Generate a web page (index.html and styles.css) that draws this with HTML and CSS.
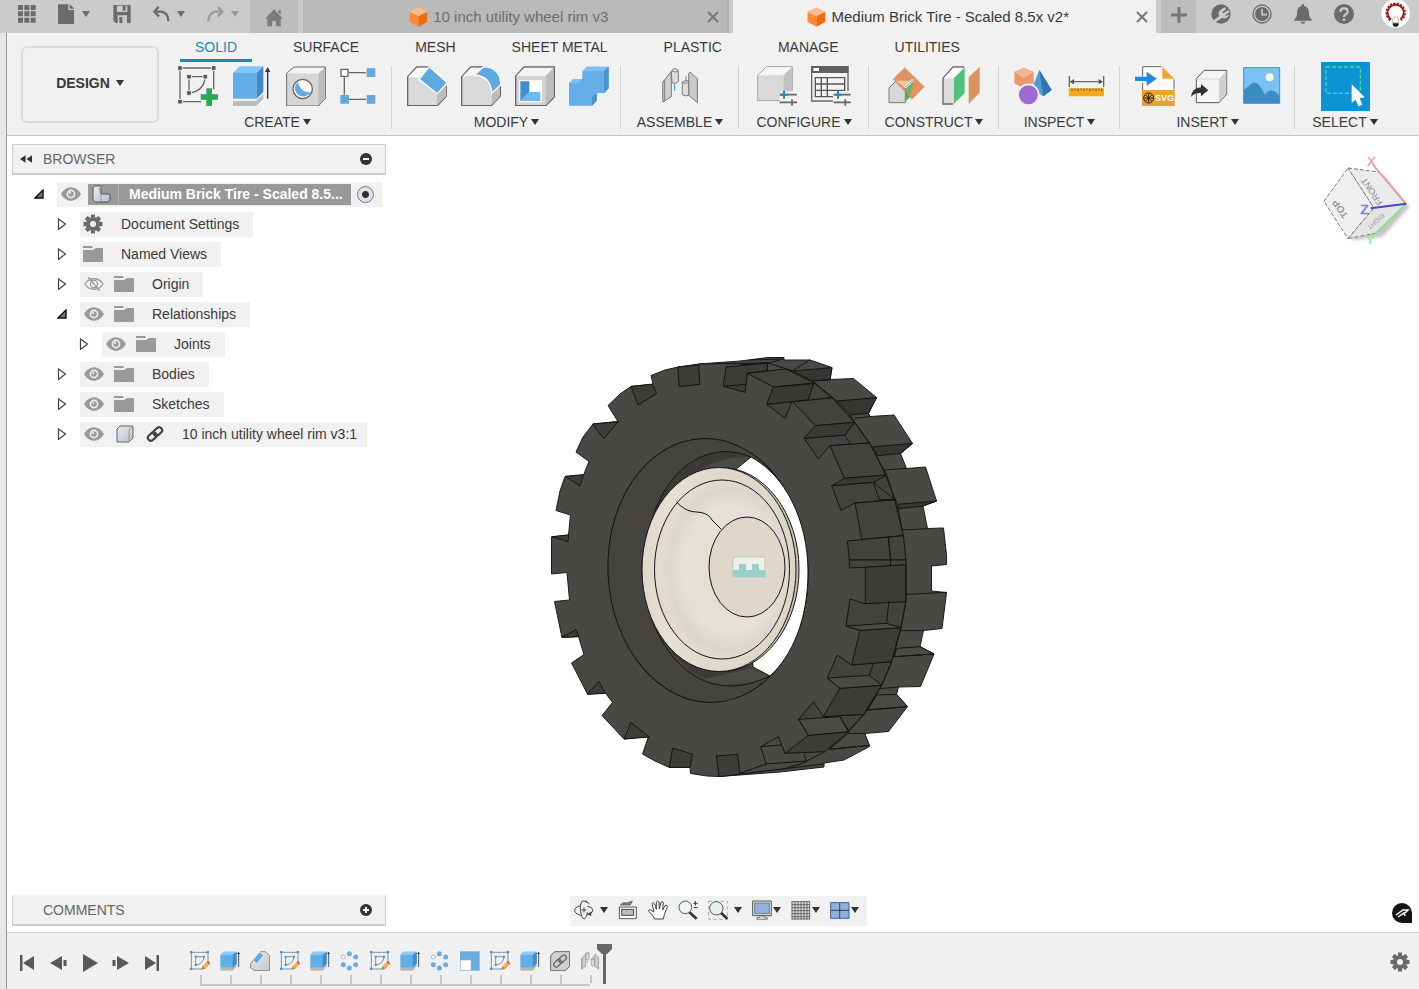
FILE: index.html
```html
<!DOCTYPE html>
<html lang="en">
<head>
<meta charset="utf-8">
<title>Medium Brick Tire - Scaled 8.5x v2*</title>
<link rel="stylesheet" href="styles.css">
</head>
<body>
<svg class="defs" aria-hidden="true">
  <defs>
    <linearGradient id="gGrey" x1="0" y1="0" x2="1" y2="1"><stop offset="0" stop-color="#e9e9e9"/><stop offset="1" stop-color="#c9c9c9"/></linearGradient>
    <linearGradient id="gSteel" x1="0" y1="0" x2="1" y2="1"><stop offset="0" stop-color="#e8ebf2"/><stop offset="1" stop-color="#b9bfcb"/></linearGradient>
    <linearGradient id="gRim" x1="0" y1="0" x2="1" y2="0"><stop offset="0" stop-color="#ded7cc"/><stop offset=".18" stop-color="#e6e0d6"/><stop offset=".4" stop-color="#dfdad0"/><stop offset="1" stop-color="#ddd5c7"/></linearGradient>
    <radialGradient id="gDish" cx=".56" cy=".5" r=".56"><stop offset="0" stop-color="#e3ddd2"/><stop offset=".62" stop-color="#e6e1d8"/><stop offset=".8" stop-color="#dbd7ce"/><stop offset=".92" stop-color="#e2dcd1"/><stop offset="1" stop-color="#e0d9cd"/></radialGradient>
    <filter id="soft"><feGaussianBlur stdDeviation="4"/></filter>
  </defs>
  <symbol id="caret" viewBox="0 0 8 6"><path d="M0 0h8L4 6z"/></symbol>
  <symbol id="cube" viewBox="0 0 56 60"><path d="M28 1 54 14 28 28 1 14z" fill="#ffb98a"/><path d="M1 14 28 28V59L1 45z" fill="#ff8a35"/><path d="M54 14 28 28V59L54 45z" fill="#f26a0f"/></symbol>
  <symbol id="close" viewBox="0 0 12 12"><path d="M1 1 11 11M11 1 1 11" fill="none" stroke="#777" stroke-width="2"/></symbol>
  <symbol id="closed" viewBox="0 0 10 12"><path d="M1.500 1 8.500 6 1.500 11.500z" fill="#fff" stroke="#444" stroke-width="1.200"/></symbol>
  <symbol id="open" viewBox="0 0 10 10"><path d="M9 1V9H1z" fill="#777" stroke="#111" stroke-width="1.400"/></symbol>
  <symbol id="eye" viewBox="0 0 20 14"><path d="M0 7C5-2 15-2 20 7 15 16 5 16 0 7z" fill="#999"/><circle cx="10" cy="7" r="4.400" fill="#f1f1f1"/><circle cx="10" cy="7" r="2.800" fill="#999"/><circle cx="9" cy="6" r="1" fill="#f1f1f1"/></symbol>
  <symbol id="eyeoff" viewBox="0 0 20 14"><path d="M1 7C5 0 15 0 19 7 15 14 5 14 1 7zM4 0 16 14" fill="none" stroke="#999" stroke-width="1.300"/><circle cx="10" cy="7" r="3.600" fill="none" stroke="#999" stroke-width="1.300"/></symbol>
  <symbol id="folder" viewBox="0 0 20 16"><path d="M0 0H9L10 2H0zM0 4H10L13 2H20V16H0z" fill="#999"/></symbol>
  <symbol id="gear" viewBox="-10 -10 20 20"><g fill="#6b6b6b"><circle r="6.800"/><path d="M-1.900-9.500H1.900L2.400-5H-2.400zM-1.900 9.500H1.900L2.400 5H-2.400z"/><path d="M-1.900-9.500H1.900L2.400-5H-2.400zM-1.900 9.500H1.900L2.400 5H-2.400z" transform="rotate(45)"/><path d="M-1.900-9.500H1.900L2.400-5H-2.400zM-1.900 9.500H1.900L2.400 5H-2.400z" transform="rotate(90)"/><path d="M-1.900-9.500H1.900L2.400-5H-2.400zM-1.900 9.500H1.900L2.400 5H-2.400z" transform="rotate(135)"/></g><circle r="3" fill="#f1f1f1"/></symbol>
  <symbol id="t-sketch" viewBox="0 0 60 60"><path d="M4 4H54V38M4 4V54H38" fill="none" stroke="#6d7d8d" stroke-width="2.500"/><path d="M17 17H42Q40 40 17 42z" fill="none" stroke="#6d7d8d" stroke-width="2.500"/><path fill="#4b8fce" d="M0 0h7v7H0zM50 0h7v7H50zM0 50h7v7H0zM14 14h6v6h-6zM39 14h6v6h-6zM14 39h6v6h-6z"/><path d="M34 56 38 45 50 33 58 41 46 53z" fill="#f2b04a"/><path d="M50 33 54 30 60 37 58 41z" fill="#e2492f"/><path d="M34 56 38 45 46 53z" fill="#a98b63"/></symbol>
  <symbol id="t-extrude" viewBox="0 0 60 60"><path d="M1 50H38L50 40V46L38 59H1z" fill="#b8b8b2"/><path d="M1 12 10 2H50V38L38 50H1z" fill="#62aee8"/><path d="M1 12 10 2H50L38 12z" fill="#8fc9f3"/><path d="M38 12 50 2V38L38 50z" fill="#3f8fd0"/><path d="M56 48V8" stroke="#333" stroke-width="2.500"/><path d="M51 9 56 2 60 9z" fill="#333"/></symbol>
  <symbol id="t-chamfer" viewBox="0 0 60 60"><path d="M2 38 32 2H46L59 14V59H14L2 50z" fill="url(#gGrey)" stroke="#777" stroke-width="2.500"/><path d="M8 28 28 3 42 12 21 38z" fill="#62a9df" stroke="#fff" stroke-width="2"/></symbol>
  <symbol id="t-circ" viewBox="0 0 60 60"><g fill="#6cacdd"><circle cx="28" cy="8" r="7.500"/><circle cx="47" cy="18" r="7.500"/><circle cx="47" cy="41" r="7.500"/><circle cx="28" cy="51" r="7.500"/><circle cx="10" cy="41" r="7.500"/></g><circle cx="10" cy="18" r="6" fill="#fff" stroke="#999" stroke-width="2"/></symbol>
  <symbol id="t-scale" viewBox="0 0 60 60"><path d="M0 1H59V59H0z" fill="#69addf"/><path d="M1 27H33V58H1z" fill="#fff" stroke="#a9b4bd" stroke-width="2"/></symbol>
  <symbol id="t-link" viewBox="0 0 60 60"><path d="M2 14 14 2H59V46L46 59H2z" fill="#cfcfcf" stroke="#666" stroke-width="3"/><g fill="none" stroke="#666" stroke-width="4"><rect x="-13" y="-8" width="26" height="15" rx="7" transform="translate(23 37) rotate(-45)"/><rect x="-13" y="-8" width="26" height="15" rx="7" transform="translate(38 24) rotate(-45)"/></g></symbol>
  <symbol id="joint" viewBox="0 0 120 120"><g stroke="#7a7a7a" stroke-width="3" stroke-linejoin="round"><path d="M9 48 34 16V92L9 108z" fill="#cfcfcf"/><path d="M9 48 14 42V104L9 108z" fill="#efefef"/><path d="M34 17Q36 8 46 8 55 9 55 16V46Q50 55 36 50z" fill="#dedede"/><path d="M36 15Q46 22 55 14" fill="none"/><path d="M86 24 90 18 112 38V110L86 88z" fill="#c9c9c9"/><path d="M67 48Q76 42 86 44V88Q76 92 67 86z" fill="#dedede"/><path d="M67 50Q76 54 86 50" fill="none"/></g><path d="M44 54V74M78 30V46" stroke="#2d9be0" stroke-width="3"/></symbol>
</svg>

<header class="topbar">
  <div class="quick">
    <button class="q-grid" aria-label="Data panel"><svg width="18" height="18" viewBox="54 12 54 54"><path fill="#6b6b6b" d="M54 12h15v15H54zM73 12h15v15H73zM92 12h15v15H92zM54 31h15v15H54zM73 31h15v15H73zM92 31h15v15H92zM54 50h15v15H54zM73 50h15v15H73zM92 50h15v15H92z"/></svg></button>
    <button class="q-file" aria-label="File"><svg width="17" height="20" viewBox="180 9 51 60"><path fill="#6b6b6b" d="M180 10H211V27H228V69H180zM215 9 229 23H215z"/></svg><svg class="caret"><use href="#caret"/></svg></button>
    <button class="q-save" aria-label="Save"><svg width="18" height="18" viewBox="347 12 54 54"><path fill="#6b6b6b" fill-rule="evenodd" d="M348 12H400V66H355L348 59zM359 14V33H390V14zM361 43V66H389V43z"/><path fill="#6b6b6b" d="M376 14h9v15h-9zM366 48h9v18h-9z"/></svg></button>
    <button class="q-undo" aria-label="Undo"><svg width="17" height="16" viewBox="474 16 51 48"><path fill="none" stroke="#6b6b6b" stroke-width="7" d="M491 18 478 33 492 47M479 33H500Q520 37 520 62"/></svg><svg class="caret"><use href="#caret"/></svg></button>
    <button class="q-redo" aria-label="Redo"><svg width="17" height="16" viewBox="617 16 51 48"><path fill="none" stroke="#9a9a9a" stroke-width="7" d="M650 18 663 33 649 47M662 33H642Q622 37 621 62"/></svg><svg class="caret"><use href="#caret"/></svg></button>
  </div>
  <button class="home" aria-label="Home"><svg width="18" height="18" viewBox="800 26 56 54"><path fill="#7c7c7c" d="M828 26 856 55H849V79H834V62H822V79H807V55H800zM841 29h8v14l-8-8z"/></svg></button>
  <div class="tab">
    <span class="tab-label"><svg width="19" height="20"><use href="#cube"/></svg>10 inch utility wheel rim v3</span>
    <button aria-label="Close tab"><svg width="12" height="12"><use href="#close"/></svg></button>
  </div>
  <div class="tab active">
    <span class="tab-label"><svg width="19" height="20"><use href="#cube"/></svg>Medium Brick Tire - Scaled 8.5x v2*</span>
    <button aria-label="Close tab"><svg width="12" height="12"><use href="#close"/></svg></button>
  </div>
  <button class="newtab" aria-label="New tab"><svg width="16" height="16" viewBox="0 0 16 16"><path d="M8 0V16M0 8H16" stroke="#777" stroke-width="3"/></svg></button>
  <div class="status">
    <button aria-label="Extensions"><svg width="20" height="20" viewBox="575 9 60 60"><circle cx="605" cy="39" r="29" fill="#6b6b6b"/><path d="M581 59 600 45Q594 35 603 27L617 18 620 25 609 33 612 37 626 27 631 33 618 42 620 46 630 39Q626 56 608 51L585 66z" fill="#cbcbcb"/></svg></button>
    <button aria-label="Job status"><svg width="20" height="20" viewBox="699 9 60 60"><circle cx="729" cy="39" r="27" fill="none" stroke="#6b6b6b" stroke-width="4"/><circle cx="729" cy="39" r="21" fill="#6b6b6b"/><path d="M729 24V41H744" fill="none" stroke="#cbcbcb" stroke-width="5"/></svg></button>
    <button aria-label="Notifications"><svg width="20" height="20" viewBox="823 9 60 60"><path fill="#6b6b6b" d="M849 10h7v5Q871 18 871 36 871 50 879 55V59H827V55Q835 50 835 36 835 18 849 15zM845 62H861Q858 68 853 68 848 68 845 62z"/></svg></button>
    <button aria-label="Help"><svg width="20" height="20" viewBox="947 9 60 60"><circle cx="977" cy="39" r="30" fill="#6b6b6b"/><path d="M966 33Q966 22 977 22 988 22 988 32 988 37 982 40 977 43 977 48" fill="none" stroke="#cbcbcb" stroke-width="6.500"/><circle cx="977" cy="56" r="4" fill="#cbcbcb"/></svg></button>
    <button class="avatar" aria-label="Account"><svg width="29" height="29" viewBox="1086 -3 87 87"><circle cx="1130" cy="40" r="43" fill="#fff"/><path d="M1114 60A27 27 0 1 1 1146 60" fill="none" stroke="#a51515" stroke-width="7" stroke-dasharray="7 3"/><path d="M1116 58A24 24 0 1 1 1144 58" fill="none" stroke="#a51515" stroke-width="5"/><path d="M1121 56Q1130 46 1139 56V68H1121z" fill="#fff" stroke="#555" stroke-width="2" stroke-dasharray="3 2"/><path d="M1121 70h18v5l-5 5h-8l-5-5z" fill="#222"/></svg></button>
  </div>
</header>

<div class="app">
  <section class="ribbon">
    <button class="workspace">DESIGN <svg class="caret"><use href="#caret"/></svg></button>
    <div class="ribbon-body">
      <nav class="modes">
        <button class="on">SOLID</button><button>SURFACE</button><button>MESH</button><button>SHEET METAL</button><button>PLASTIC</button><button>MANAGE</button><button>UTILITIES</button>
      </nav>
      <div class="groups">
        <div class="group">
          <div class="tools">
            <button aria-label="Create sketch"><svg viewBox="534 200 120 120"><path d="M540 206H641V270M540 206V307H604M567 232H616M567 232V281M616 232Q612 276 567 281" fill="none" stroke="#666" stroke-width="4"/><g fill="#555" stroke="#f1f1f1" stroke-width="3"><path d="M533 199h14v14h-14zM634 199h14v14h-14zM533 300h14v14h-14zM560 225h14v14h-14zM609 225h14v14h-14zM560 274h14v14h-14z"/></g><path d="M619 267h17v18h19v16h-19v19h-17v-19h-17v-16h17z" fill="#2aa854"/></svg></button>
            <button aria-label="Extrude"><svg viewBox="696 200 120 120"><path d="M699 305H768L790 284V298L768 320H699z" fill="#b9bcbf"/><path d="M699 221H770V298H699z" fill="#63ade6"/><path d="M699 221 719 201H790L770 221z" fill="#85c5f3"/><path d="M770 221 790 201V277L770 298z" fill="#3c8ac9"/><path d="M803 298V214" stroke="#333" stroke-width="4"/><path d="M795 218 803 203 811 218z" fill="#333"/></svg></button>
            <button aria-label="Hole"><svg viewBox="858 200 120 120"><path d="M860 222 882 203H976V297L955 320H860z" fill="#d6d6d6" stroke="#666" stroke-width="3"/><path d="M862 222 883 205H973L955 223z" fill="#f4f4f4"/><path d="M955 223 974 206V296L955 317z" fill="#bdbdbd"/><circle cx="908" cy="269" r="29" fill="#fff" stroke="#666" stroke-width="4"/><path d="M893 248A25 25 0 1 0 932 278Q903 282 893 248z" fill="#5fa9e0"/></svg></button>
            <button aria-label="Pattern"><svg viewBox="1018 200 120 120"><path d="M1045 220H1096M1031 234V286M1045 300H1096" stroke="#666" stroke-width="4"/><path d="M1021 210h21v21h-21z" fill="#fff" stroke="#666" stroke-width="4"/><path d="M1098 207h26v26h-26zM1019 287h26v26h-26zM1098 287h26v26h-26z" fill="#63a9de"/></svg></button>
          </div>
          <button class="caption">CREATE <svg class="caret"><use href="#caret"/></svg></button>
        </div>
        <div class="group">
          <div class="tools">
            <button aria-label="Chamfer"><svg viewBox="51 200 120 120"><path d="M53 319V232L80 203H120L170 262V290L142 319z" fill="#d9d9d9" stroke="#666" stroke-width="4"/><path d="M55 232 81 205H118L90 236z" fill="#f7f7f7"/><path d="M141 282 169 254V290L141 317z" fill="#bdbdbd"/><path d="M87 240 118 202 172 250 142 283z" fill="#5fa9e2" stroke="#fff" stroke-width="4"/></svg></button>
            <button aria-label="Fillet"><svg viewBox="213 200 120 120"><path d="M215 319V232L242 203H282C320 205 332 235 331 262V290L304 319z" fill="#d9d9d9" stroke="#666" stroke-width="4"/><path d="M217 232 243 205H282L256 228z" fill="#f7f7f7"/><path d="M305 282 330 258V290L305 317z" fill="#bdbdbd"/><path d="M253 227 281 202C318 203 337 232 331 258L305 282C304 248 288 230 253 227z" fill="#5fa9e2" stroke="#fff" stroke-width="4"/></svg></button>
            <button aria-label="Shell"><svg viewBox="375 200 120 120"><path d="M377 319V230L402 203H493V293L467 319z" fill="#d4d4d4" stroke="#666" stroke-width="4"/><path d="M379 230 403 205H491L467 230z" fill="#f4f4f4"/><path d="M467 230 491 206V292L467 317z" fill="#bdbdbd"/><path d="M387 242H456V309H387z" fill="#fff"/><path d="M391 246H418V278L391 305z" fill="#3f8fd0"/><path d="M391 305 418 278H451V305z" fill="#6fb7ea"/></svg></button>
            <button aria-label="Combine"><svg viewBox="537 200 120 120"><path d="M537 252 550 239H577V216L591 202H656V267L642 281H620V305L606 319H537z" fill="#63aee6"/><path d="M537 252 550 239H577L565 252zM577 216 591 202H656L642 216z" fill="#7fc0f0"/><path d="M642 216 656 202V267L642 281zM606 293 620 281V305L606 319z" fill="#4593cf"/></svg></button>
          </div>
          <button class="caption">MODIFY <svg class="caret"><use href="#caret"/></svg></button>
        </div>
        <div class="group even g-mid">
          <div class="tools"><button aria-label="Joint"><svg><use href="#joint"/></svg></button></div>
          <button class="caption">ASSEMBLE <svg class="caret"><use href="#caret"/></svg></button>
        </div>
        <div class="group even g-wide">
          <div class="tools">
            <button aria-label="Configure"><svg viewBox="80 200 120 120"><path d="M82 304V228L108 202H186V272L160 304z" fill="#d9d9d9" stroke="#888" stroke-width="2"/><path d="M84 228 109 204H184L160 228z" fill="#f6f6f6"/><path d="M160 228 185 204V270L160 300z" fill="#c2c2c2"/><path d="M148 276H204V322H148z" fill="#f1f1f1"/><path d="M148 286H201M148 309H201M185 300V319" stroke="#666" stroke-width="5"/><path d="M161 274V298M149 286H173" stroke="#2e86b8" stroke-width="6"/></svg></button>
            <button aria-label="Configuration table"><svg viewBox="242 200 120 120"><path d="M244 202H353V305H244z" fill="#f4f4f4" stroke="#666" stroke-width="4"/><path d="M243 201H354V221H243z" fill="#5f5f5f"/><path d="M249 206h17v9h-17z" fill="#fff"/><path d="M255 235H343V292H255zM255 254H343M255 273H343M273 235V292M291 235V292" fill="none" stroke="#555" stroke-width="4"/><path d="M308 275H364V322H308z" fill="#f1f1f1"/><path d="M310 286H361M310 309H361M345 300V319" stroke="#666" stroke-width="5"/><path d="M323 274V298M311 286H335" stroke="#2e86b8" stroke-width="6"/></svg></button>
          </div>
          <button class="caption">CONFIGURE <svg class="caret"><use href="#caret"/></svg></button>
        </div>
        <div class="group even g-wide">
          <div class="tools">
            <button aria-label="Plane at angle"><svg viewBox="470 200 120 120"><path d="M476 310V266L498 244 525 262V310z" fill="#d8d8d8" stroke="#777" stroke-width="3"/><path d="M524 268 552 250 540 292 524 308z" fill="#45b070"/><path d="M523 205 582 262 545 300 525 278 500 252 488 240z" fill="#dd945e" stroke="#c77d48"/><path d="M497 244H546L524 266z" fill="#f0c39f"/><path d="M524 268 550 246 538 286 525 278z" fill="#6fae72"/><path d="M525 264 548 241" stroke="#fff" stroke-width="7"/><path d="M526 263 547 242" stroke="#41a868" stroke-width="3"/></svg></button>
            <button aria-label="Offset plane"><svg viewBox="632 200 120 120"><path d="M638 314V237L668 203H700V280L668 314z" fill="#ddd" stroke="#666" stroke-width="4"/><path d="M640 237 669 205H699L668 237z" fill="#fafafa"/><path d="M669 237 704 203V282L669 316z" fill="#51c07c" stroke="#f6f6f6" stroke-width="2"/><path d="M715 234 748 202V280L715 314z" fill="#db935f"/></svg></button>
          </div>
          <button class="caption">CONSTRUCT <svg class="caret"><use href="#caret"/></svg></button>
        </div>
        <div class="group">
          <div class="tools">
            <button aria-label="Inspect"><svg viewBox="852 200 120 120"><path d="M882 205 911 218V252L882 267 853 252V218z" fill="#e79a6c"/><path d="M882 205 911 218 882 236 853 218z" fill="#f2b591"/><path d="M928 212 965 272 940 291 905 270z" fill="#4e9cd6"/><path d="M928 212 965 272 940 291z" fill="#2f77ad"/><circle cx="895" cy="286" r="31" fill="#9d69d5" stroke="#f1f1f1" stroke-width="5"/></svg></button>
            <button aria-label="Measure"><svg viewBox="1016 200 120 120"><path d="M1020 230V263M1123 230V263M1024 247H1118" stroke="#666" stroke-width="4"/><path d="M1021 247 1034 239V255zM1121 247 1108 239V255z" fill="#555"/><path d="M1018 267H1124V291H1018z" fill="#f5ab19"/><path d="M1028 267v9M1037 267v6M1046 267v9M1055 267v6M1064 267v9M1073 267v6M1082 267v9M1091 267v6M1100 267v9M1109 267v6M1117 267v9" stroke="#6d5620" stroke-width="3"/></svg></button>
          </div>
          <button class="caption">INSPECT <svg class="caret"><use href="#caret"/></svg></button>
        </div>
        <div class="group">
          <div class="tools">
            <button aria-label="Insert SVG"><svg viewBox="348 200 120 120"><path d="M371 202H428L465 238V272H371z" fill="#fbfbfb"/><path d="M371 232V202H428M465 240V270M371 250V272" fill="none" stroke="#666" stroke-width="3"/><path d="M430 202 466 238H430z" fill="#e9a93a"/><path d="M348 232H383V217L413 238 383 259V245H348z" fill="#2388d8"/><path d="M369 272H467V320H369z" fill="#e6a32e"/><g stroke="#2a2212" stroke-width="3" fill="none"><circle cx="389" cy="296" r="15"/><path d="M389 283V309M376 296H402M380 287 398 305M398 287 380 305"/></g><text x="408" y="306" font-family="Liberation Sans" font-weight="bold" font-size="27" fill="#fff">SVG</text></svg></button>
            <button aria-label="Insert derive"><svg viewBox="510 200 120 120"><path d="M532 310V238L556 213H623V285L600 310z" fill="#f4f4f4" stroke="#555" stroke-width="3"/><path d="M600 239 622 215V284L600 309z" fill="#cfcfcf"/><path d="M532 239H600" stroke="#ccc" stroke-width="2"/><path d="M516 293Q518 266 546 264V254L568 273 546 291V281Q527 279 516 293z" fill="#333"/></svg></button>
            <button aria-label="Insert canvas"><svg viewBox="671 200 120 120"><path d="M673 205H781V312H673z" fill="#79c2f5" stroke="#4f8fc0" stroke-width="3"/><path d="M673 272C690 260 695 250 706 250 722 250 728 275 738 286 748 270 762 268 781 290V311H673z" fill="#3c8cc4"/><circle cx="751" cy="234" r="12" fill="#f6f7dc"/></svg></button>
          </div>
          <button class="caption">INSERT <svg class="caret"><use href="#caret"/></svg></button>
        </div>
        <div class="group even g-select">
          <div class="tools"><button aria-label="Select"><svg viewBox="903 187 147 147"><path d="M903 187H1050V334H903z" fill="#0b93d5"/><path d="M918 202H1021V281H918z" fill="none" stroke="#52d98f" stroke-width="4" stroke-dasharray="12 6"/><path d="M995 254V309L1007 300 1015 320 1027 315 1019 296 1034 293z" fill="#fff"/></svg></button></div>
          <button class="caption">SELECT <svg class="caret"><use href="#caret"/></svg></button>
        </div>
      </div>
    </div>
  </section>

  <main class="viewport">
    <svg class="model" viewBox="7 136 1412 796" role="img" aria-label="Tire model">
      <path fill="#494844" stroke="#1c1c1a" stroke-width="1" stroke-linejoin="round" d="M699 364 678 367 665 370 651 375.500 653 384 631 386.500 620 394 608 405.500 618 421.500 593 424 583 437 576 452 589 461.500 583.500 475 565 476.500 560 491 556 510.500 570.500 515 568.500 535 551.500 537V574L567 572.500 569.500 600 554.500 601.500 562 637.500 578.500 636.500 584 654.500 571.500 663 587.500 694 605.500 693 612.500 702.500 602 715.500 624 739 648.500 736.500 642.500 754 655 761 669.500 767.500H690L690.500 773.500 707 776 719 776.500 780 772 824 767 824 763 844 760 869.500 746.500 864.500 733.500 888.500 731.500 907.500 706.500 896.500 694.500 898.500 687 920.500 686.500 934 654 920 646.500 923.500 630.500 942 628.500 946.500 592.500 931.500 591V566L946.500 564.500V555L943.500 528 927.500 528.500 923 506 936.500 501 925.500 467 906.500 468.500 900.500 453.500 912.500 443.500 894 415 870 416.500 868.500 413.500 876.500 397.500 853.500 378.500 830 379.500 832 367.500 810 360H784V357.500H768L740 361z"/>
      <g transform="translate(740 345) scale(.33333)" stroke="#141412" stroke-width="3" stroke-linejoin="round" fill="#43423f">
        <path fill="#3c3b38" d="M82 53 30 58 0 60V118L14 142 22 85 82 78z"/>
        <path fill="#373633" d="M157 78 276 68 270 105 218 108zM290 168 410 158 385 205 330 209zM396 306 518 295 483 325 413 332zM472 478 590 468 549 483 475 491z"/>
        <path d="M22 85 138 72 222 114 100 126zM80 178 156 170 135 220zM158 170 276 158 344 232 226 242zM192 280 314 270 388 293 270 302 235 342zM270 302 388 293 440 390 313 400zM275 422 400 412 464 464 345 474 303 496zM400 412 440 390 464 464H418zM345 474 464 464 490 572 365 583zM322 588 445 576 452 645H328zM445 576 490 572 498 645H452z"/>
        <path d="M314 270 344 232 388 293 332 298zM204 164 222 114 276 158 158 170z"/>
        <path fill="#3a3936" d="M100 126 221 116 204 164 156 170 80 178zM226 242 344 232 314 270 192 280zM275 422 313 400 440 390 400 412z"/>
        <path fill="none" d="M157 78 210 44M82 53 157 78M30 45 131 42M218 108 290 168M330 209 344 232M385 205 390 215 344 220M344 232 396 306 430 375 499 370M430 375 472 478 487 555 562 551M138 72 157 78M218 108 270 103M0 62 82 53"/>
      </g>
      <g transform="translate(740 560) scale(.33333)" stroke="#141412" stroke-width="3" stroke-linejoin="round" fill="#43423f">
        <path d="M328 0H498V14L376 22 328 24zM330 117 376 131 498 122 483 203 360 211 318 198zM292 285 335 315 455 305 425 376 300 385 262 354zM220 425 250 470 372 463 325 515 205 526 176 478z"/>
        <path fill="#3d3c39" d="M376 22 498 14 498 125 376 131zM360 211 483 203 455 305 335 315zM300 385 425 376 372 463 250 470zM205 526 325 515 255 575 135 580z"/>
        <path fill="#4b4a45" d="M318 198 440 190 483 203 360 211zM262 354 388 346 425 376 300 385zM176 478 300 470 328 515 205 526zM463 290 470 265 540 260 582 282zM383 450 410 405 470 403 502 440zM268 568 325 520 374 520 388 556z"/>
        <path fill="none" d="M446 128 440 190M498 14V125L483 203 455 305 425 376 372 463 325 515M400 311 388 346M300 470 325 515M452 0V16M498 103 620 97M483 212 551 212M463 290 582 282M415 386 476 381M383 450 502 440M115 530 62 560 78 612 200 603 255 575M115 530 135 580M62 560 124 555M192 582 200 606M78 612 0 640M200 606 120 630M268 568 388 556M0 642 252 612"/>
      </g>
      <g transform="translate(540 345) scale(.33333)" stroke="#141412" stroke-width="3" stroke-linejoin="round" fill="#3d3c39">
        <path d="M413 66 418 125 480 118 476 60zM558 66 550 124 615 142 622 84 680 78 684 54zM550 124 618 118M273 124 294 180 350 146 338 118zM158 237 191 282 235 230zM76 394 120 423 130 389zM35 575 84 590 86 570z"/>
        <path fill="none" d="M476 57 684 54 720 45"/>
      </g>
      <g transform="translate(540 560) scale(.33333)" stroke="#141412" stroke-width="3" stroke-linejoin="round" fill="#3d3c39">
        <path d="M66 232 108 209 116 230zM142 403 177 364 196 400zM252 537 273 487 328 531zM388 622 398 564 458 583 450 622zM537 650 529 588 593 583 600 643z"/>
      </g>
      <g stroke="#141412" stroke-width="1">
        <ellipse cx="708" cy="570.500" rx="100" ry="132" transform="rotate(-3 708 570.500)" fill="#454440"/>
        <path fill="#3b3a37" stroke="none" d="M648 535C658 488 687 452 727 451.500 737 452 746 455 751 457L735 471H700C678 480 660 505 650 540zM662 637C685 678 724 696 770 676L753 667 720 671C695 670 677 655 662 637z"/>
        <path fill="#4c4b48" stroke="none" d="M695 473Q720 456 750 457L735 470zM700 680Q735 690 769 676L753 668z"/>
        <path fill="none" d="M649 530C660 485 687 452 727 451.500Q740 452 751 457M652 620C672 672 715 703 770 676"/>
        <path fill="#fff" d="M735 470 751 457C785 475 808 520 808 572 808 620 792 656 770 676L753 667z"/>
        <ellipse cx="721" cy="569.500" rx="78" ry="102" fill="#c8c1b4"/>
        <ellipse cx="719" cy="569.500" rx="77" ry="102" fill="url(#gRim)"/>
        <ellipse cx="722" cy="569.500" rx="67.500" ry="89.500" fill="url(#gDish)"/>
        <ellipse cx="747" cy="567" rx="38" ry="50" fill="#dfd7c9"/>
        <path fill="none" d="M676.500 502Q684 510 692 511.500L701 512.500Q709 514 712 520L721 529"/>
      </g>
      <path d="M733 557H765V577H733z" fill="#eef0ec" stroke="#c3c7bd"/>
      <path d="M733 570H739V564H746V570H752V564H759V570H765V577H733z" fill="#99d0c8"/>
    </svg>

    <div class="side">
      <section class="panel"><button class="collapse" aria-label="Collapse browser"><svg width="12" height="8" viewBox="0 0 13 8"><path d="M6 0V8L0 4zM13 0V8L7 4z" fill="#333"/></svg></button><h2>BROWSER</h2><button aria-label="Hide browser"><svg width="12" height="12" viewBox="0 0 12 12"><circle cx="6" cy="6" r="6" fill="#333"/><path d="M3 6H9" stroke="#fff" stroke-width="2"/></svg></button></section>
      <ul class="tree">
        <li class="root"><button aria-label="Collapse"><svg width="10" height="10"><use href="#open"/></svg></button><div class="row"><svg width="20" height="14"><use href="#eye"/></svg><div class="doc"><svg width="19" height="18" viewBox="0 0 19 18"><path d="M1 3 3 1H9V9H17L18 10V15L16 17H3L1 15z" fill="url(#gSteel)" stroke="#555"/><path d="M9 17V9L7 3" fill="none" stroke="#8a909a"/></svg><b>Medium Brick Tire - Scaled 8.5...</b></div><input type="radio" checked aria-label="Activate component"></div></li>
        <li><button aria-label="Expand"><svg width="10" height="12"><use href="#closed"/></svg></button><div class="row plain"><svg width="20" height="20"><use href="#gear"/></svg><span>Document Settings</span></div></li>
        <li><button aria-label="Expand"><svg width="10" height="12"><use href="#closed"/></svg></button><div class="row plain"><svg width="20" height="16"><use href="#folder"/></svg><span>Named Views</span></div></li>
        <li><button aria-label="Expand"><svg width="10" height="12"><use href="#closed"/></svg></button><div class="row"><svg width="20" height="14"><use href="#eyeoff"/></svg><svg width="20" height="16"><use href="#folder"/></svg><span>Origin</span></div></li>
        <li><button aria-label="Collapse"><svg width="10" height="10"><use href="#open"/></svg></button><div class="row"><svg width="20" height="14"><use href="#eye"/></svg><svg width="20" height="16"><use href="#folder"/></svg><span>Relationships</span></div></li>
        <li class="deep"><button aria-label="Expand"><svg width="10" height="12"><use href="#closed"/></svg></button><div class="row"><svg width="20" height="14"><use href="#eye"/></svg><svg width="20" height="16"><use href="#folder"/></svg><span>Joints</span></div></li>
        <li><button aria-label="Expand"><svg width="10" height="12"><use href="#closed"/></svg></button><div class="row"><svg width="20" height="14"><use href="#eye"/></svg><svg width="20" height="16"><use href="#folder"/></svg><span>Bodies</span></div></li>
        <li><button aria-label="Expand"><svg width="10" height="12"><use href="#closed"/></svg></button><div class="row"><svg width="20" height="14"><use href="#eye"/></svg><svg width="20" height="16"><use href="#folder"/></svg><span>Sketches</span></div></li>
        <li><button aria-label="Expand"><svg width="10" height="12"><use href="#closed"/></svg></button><div class="row linked"><svg width="20" height="14"><use href="#eye"/></svg><svg width="20" height="18" viewBox="0 0 20 18"><path d="M2 4 5 1H18V13L14 17H2z" fill="url(#gSteel)" stroke="#666"/><path d="M14 17V5L18 1" fill="none" stroke="#999"/></svg><svg width="18" height="18" viewBox="-9 -9 18 18"><g fill="none" stroke="#444" stroke-width="2.200" transform="rotate(-42)"><rect x="-8.500" y="-3" width="9.500" height="6" rx="3"/><rect x="-1" y="-3" width="9.500" height="6" rx="3"/></g></svg><span>10 inch utility wheel rim v3:1</span></div></li>
      </ul>
    </div>

    <svg class="viewcube" width="100" height="100" viewBox="60 35 300 300" role="img" aria-label="View cube">
      <path d="M170 100 255 105 332 200 250 290 160 300z" fill="#999" opacity=".55" filter="url(#soft)"/>
      <g stroke="#777" stroke-width="3" stroke-dasharray="12 6" fill="#f0f0f0"><path d="M75 183 147 83 225 203 147 295z"/><path fill="#ebebeb" d="M147 83 240 95 320 190 225 203z"/><path fill="#e4e4e4" d="M147 295 225 203 320 190 232 278z"/></g>
      <path d="M222 73 320 190" stroke="#e09a9a" stroke-width="5"/><path d="M220 288 320 192" stroke="#8be08f" stroke-width="5"/><path d="M215 204 322 190" stroke="#4a4ab8" stroke-width="6"/>
      <g font-family="Liberation Sans" text-anchor="middle">
        <text font-size="30" font-weight="bold" fill="#999" transform="translate(132 200) rotate(-125)">TOP</text>
        <text font-size="27" fill="#888" transform="translate(226 148) rotate(-124)">FRONT</text>
        <text font-size="20" fill="#999" transform="translate(226 238) rotate(138)">RIGHT</text>
        <text font-size="40" fill="#ee9c9c" stroke="#ee9c9c" x="217" y="76">X</text><text font-size="40" fill="#7d7ddd" stroke="#7d7ddd" stroke-width="2" x="197" y="220">Z</text><text font-size="38" fill="#90ee94" stroke="#90ee94" x="213" y="311">Y</text>
      </g>
    </svg>

    <div class="bottom">
      <section class="panel comments"><h2>COMMENTS</h2><button aria-label="Show comments"><svg width="12" height="12" viewBox="0 0 12 12"><circle cx="6" cy="6" r="6" fill="#333"/><path d="M3 6H9M6 3V9" stroke="#fff" stroke-width="2"/></svg></button></section>
      <nav class="navbar">
        <button aria-label="Orbit"><svg width="20" height="20" viewBox="521 41 60 60"><g fill="none" stroke="#444" stroke-width="3"><path d="M541 87Q522 82 523 70 528 58 549 58 575 60 578 71 576 83 558 86"/><path d="M561 50Q554 41 546 44 537 55 541 75 543 96 552 98 561 93 561 78" fill="#e7f0f5"/><path d="M556 43 568 53M551 64V78M544 71H558"/></g><path d="M562 83 573 75V90z" fill="#444"/></svg><svg class="caret"><use href="#caret"/></svg></button>
        <button aria-label="Look at"><svg width="20" height="20" viewBox="645 41 60 60"><path d="M649 62H700V97H649z" fill="#fff" stroke="#555" stroke-width="3"/><path d="M656 69H692V87H656z" fill="#b8bcc4" stroke="#444" stroke-width="3"/><path d="M652 56Q660 46 672 50L688 44 682 56z" fill="#888" stroke="#444" stroke-width="2"/></svg></button>
        <button aria-label="Pan"><svg width="20" height="20" viewBox="742 41 60 60"><path d="M761 98 757 88 743 74Q744 67 752 72L760 77 754 52Q757 45 762 53L767 69 767 47Q771 40 775 47L776 68 781 48Q786 42 788 50L786 71 793 58Q800 54 800 61L791 85 788 98z" fill="#fff" stroke="#444" stroke-width="3"/></svg></button>
        <button aria-label="Zoom"><svg width="20" height="20" viewBox="838 41 60 60"><path d="M872 78 894 97" stroke="#333" stroke-width="8"/><circle cx="860" cy="63" r="19" fill="#eff6f7" stroke="#555" stroke-width="3"/><path d="M884 51H897M890 44V58M885 64H897" stroke="#333" stroke-width="3"/></svg></button>
        <button aria-label="Fit"><svg width="20" height="20" viewBox="935 41 60 60"><path d="M937 45H994V99H937z" fill="none" stroke="#888" stroke-width="2" stroke-dasharray="10 8"/><path d="M972 78 993 97" stroke="#333" stroke-width="8"/><circle cx="960" cy="66" r="20" fill="#e7f1ee" stroke="#555" stroke-width="3"/></svg><svg class="caret"><use href="#caret"/></svg></button>
        <button class="tight" aria-label="Display settings"><svg width="20" height="20" viewBox="1060 41 60 60"><path d="M1062 44H1118V88H1062z" fill="#e2e2e2" stroke="#555" stroke-width="3"/><path d="M1068 50H1112V82H1068z" fill="#92b0df" stroke="#555" stroke-width="2"/><path d="M1082 89H1098V94H1106V99H1074V94H1082z" fill="#ddd" stroke="#555" stroke-width="2"/></svg><svg class="caret"><use href="#caret"/></svg></button>
        <button class="tight" aria-label="Grid settings"><svg width="20" height="20" viewBox="1175 41 60 60"><path d="M1177 45H1232V99H1177z" fill="#ddd"/><path d="M1177 46H1232M1177 55H1232M1177 64H1232M1177 73H1232M1177 82H1232M1177 91H1232M1177 98H1232M1178 45V99M1187 45V99M1196 45V99M1205 45V99M1214 45V99M1223 45V99M1231 45V99" stroke="#555" stroke-width="2.500"/></svg><svg class="caret"><use href="#caret"/></svg></button>
        <button class="tight" aria-label="Viewports"><svg width="20" height="20" viewBox="1292 41 60 60"><path d="M1294 49H1349V96H1294z" fill="#8fb0dd" stroke="#47618c" stroke-width="3"/><path d="M1321 49V96M1294 72H1349" stroke="#2f4568" stroke-width="3"/></svg><svg class="caret"><use href="#caret"/></svg></button>
      </nav>
      <button class="assist" aria-label="Assistant"><svg width="20" height="20" viewBox="0 0 20 20"><path d="M10 0A10 10 0 0 1 20 10V20H10A10 10 0 0 1 10 0z" fill="#151515"/><path d="M4 12 11 7H16L13 10M6 14 12 10 13 13" fill="none" stroke="#fff" stroke-width="1.500"/></svg></button>
    </div>
  </main>

  <footer class="timeline">
    <div class="play">
      <button aria-label="Go to start"><svg width="16" height="16" viewBox="0 0 16 16"><path d="M1 0H3.500V16H1zM15 1V15L4 8z"/></svg></button>
      <button aria-label="Step back"><svg width="17" height="16" viewBox="0 0 17 16"><path d="M12 1V15L0 8zM13.500 5H16.500V11H13.500z"/></svg></button>
      <button aria-label="Play"><svg width="16" height="18" viewBox="0 0 16 18"><path d="M1 0V18L16 9z"/></svg></button>
      <button aria-label="Step forward"><svg width="17" height="16" viewBox="0 0 17 16"><path d="M5 1V15L17 8zM.500 5H3.500V11H.500z"/></svg></button>
      <button aria-label="Go to end"><svg width="16" height="16" viewBox="0 0 16 16"><path d="M15 0H12.500V16H15zM1 1V15L12 8z"/></svg></button>
    </div>
    <ol class="features">
      <li><svg><use href="#t-sketch"/></svg></li><li><svg><use href="#t-extrude"/></svg></li><li><svg><use href="#t-chamfer"/></svg></li><li><svg><use href="#t-sketch"/></svg></li><li><svg><use href="#t-extrude"/></svg></li><li><svg><use href="#t-circ"/></svg></li><li><svg><use href="#t-sketch"/></svg></li><li><svg><use href="#t-extrude"/></svg></li><li><svg><use href="#t-circ"/></svg></li><li><svg><use href="#t-scale"/></svg></li><li><svg><use href="#t-sketch"/></svg></li><li><svg><use href="#t-extrude"/></svg></li><li><svg><use href="#t-link"/></svg></li><li><svg><use href="#joint"/></svg></li>
    </ol>
    <svg class="marker" width="15" height="40" viewBox="0 0 15 40"><path d="M0 0H15V5L10 10H9V40H6V10H5L0 5z" fill="#666"/></svg>
    <button class="settings" aria-label="Timeline settings"><svg width="20" height="20"><use href="#gear"/></svg></button>
  </footer>
</div>
</body>
</html>
```
FILE: styles.css
```css
* { box-sizing: border-box; }
body {
  margin: 0;
  min-height: 100vh;
  display: flex;
  flex-direction: column;
  font: 14px/20px "Liberation Sans", Arial, sans-serif;
  color: #3a3a3a;
  background: #fff;
}
button {
  display: inline-flex;
  align-items: center;
  justify-content: center;
  margin: 0;
  padding: 0;
  border: 0;
  background: none;
  font: inherit;
  color: inherit;
}
svg { display: block; flex: none; }
.defs { position: absolute; width: 0; height: 0; }
.caret { width: 8px; height: 6px; fill: #333; }

/* Document bar */
.topbar { display: flex; height: 33px; background: #cbcbcb; }
.quick { display: flex; width: 250px; padding: 0 11px 6px 18px; justify-content: space-between; flex: none; }
.quick button { gap: 7px; }
.quick .caret { fill: #6b6b6b; }
.quick .q-redo .caret { fill: #999; }
.home { width: 48px; padding-top: 3px; margin-right: 5px; background: #bdbdbd; }
.tab { flex: 1; display: flex; align-items: center; padding: 0 8px; background: #b9b9b9; color: #6d6d6d; font-size: 15px; border-right: 2px solid #aeaeae; }
.tab-label { flex: 1; display: flex; align-items: center; justify-content: center; gap: 5px; white-space: nowrap; }
.tab.active { margin-left: 4px; background: #f1f1f1; color: #3a3a3a; border: 0; }
.newtab { width: 35px; margin-left: 5px; padding-bottom: 3px; background: #bdbdbd; }
.status { display: flex; align-items: center; gap: 21px; padding: 0 9px 6px 15px; }
.status .avatar { margin-left: 6px; }

.app { flex: 1; display: flex; flex-direction: column; border-left: 6px solid #e7e7e7; box-shadow: inset 1px 0 #999; padding-left: 1px; }

/* Ribbon */
.ribbon { display: flex; height: 103px; background: #f1f1f1; border-bottom: 1px solid #c4c4c4; }
.workspace { width: 138px; height: 77px; margin: 13px 4px 0 14px; gap: 6px; padding-bottom: 3px; border: 2px solid #dcdcdc; border-radius: 6px; font-weight: bold; flex: none; }
.ribbon-body { flex: 1; }
.modes { display: flex; gap: 26px; padding: 4px 0 0 17px; height: 29px; }
.modes button { padding: 0 15px 3px; border-bottom: 3px solid transparent; white-space: nowrap; }
.modes .on { color: #1b86b9; border-color: #1b86b9; }
.groups { display: flex; }
.group { position: relative; display: flex; flex-direction: column; align-items: center; padding: 4px 12px 0 15px; height: 69px; }
.group::after { content: ""; position: absolute; right: 0; top: 4px; width: 1px; height: 63px; background: #d2d2d2; }
.group.even { padding: 4px 12px 0; }
.tools { display: flex; gap: 14px; }
.tools svg { width: 40px; height: 40px; }
.caption { gap: 3px; margin-top: 6px; padding-right: 3px; white-space: nowrap; }
.even .caption { padding-right: 0; }
.g-mid { min-width: 118px; }
.g-wide { min-width: 130px; }
.g-select { min-width: 100px; }
.g-select::after { display: none; }
.g-select .tools { margin: -4px 0 -5px; }
.g-select .tools svg { width: 49px; height: 49px; }

/* Canvas */
.viewport { position: relative; flex: 1; display: flex; flex-direction: column; justify-content: space-between; padding: 8px 0 6px 5px; background: #fff; }
.model { position: absolute; inset: 0; width: 100%; height: 100%; }
.side, .bottom { position: relative; }
.side { width: 374px; }
.panel { display: flex; align-items: center; height: 31px; width: 374px; padding: 0 13px 0 7px; background: #f1f1f1; border: 1px solid #ccc; border-bottom-width: 2px; }
.panel h2 { flex: 1; margin: 0 0 0 11px; font-size: 14px; font-weight: normal; color: #666; }
.panel.comments { border-top-color: #f1f1f1; }
.panel.comments h2 { margin-left: 23px; }
.tree { list-style: none; margin: 4px 0 0; padding: 0 0 0 40px; }
.tree li { display: flex; align-items: center; height: 30px; gap: 12px; padding-left: 4px; }
.tree li > button { width: 12px; }
.tree .root { margin-left: -23px; }
.tree .deep { margin-left: 22px; }
.row { display: flex; align-items: center; height: 25px; padding: 0 14px 0 4px; background: #f1f1f1; white-space: nowrap; }
.row svg + svg { margin-left: 10px; }
.row > span { margin-left: 18px; }
.row.linked svg + svg { margin-left: 11px; }
.row.linked { padding-right: 10px; }
.tree .root .row { padding: 0 8px 0 4px; }
.row.plain { padding-left: 3px; }
.doc { display: flex; align-items: center; margin-left: 7px; padding-left: 4px; width: 263px; height: 21px; background: #999; color: #fff; }
.doc b { flex: 1; margin-left: 7px; padding-left: 10px; border-left: 1px solid #b5b5b5; }
.row input { appearance: none; width: 17px; height: 17px; margin: 0 0 0 6px; border: 1px solid #777; border-radius: 50%; background: radial-gradient(circle, #333 0 3px, #dbe2ee 4px); }
.viewcube { position: absolute; right: 0; top: 16px; }
.bottom { display: grid; grid-template-columns: 1fr auto 1fr; align-items: center; }
.navbar { display: flex; gap: 10px; height: 30px; margin-left: 5px; padding: 0 8px 2px 4px; background: #f1f1f1; }
.navbar button { gap: 6px; }
.navbar .tight { gap: 1px; }
.assist { justify-self: end; margin: 4px 7px 0 0; }

/* Timeline */
.timeline { display: flex; height: 57px; align-items: flex-start; background: #f0f0f0; border-top: 1px solid #d0d0d0; }
.play { display: flex; align-items: center; justify-content: space-between; width: 141px; height: 59px; margin: 0 25px 0 12px; flex: none; fill: #595959; }
.features { display: flex; list-style: none; margin: 18px 0 0; padding: 0; }
.features li { width: 30px; }
.features svg { width: 20px; height: 20px; margin: 0 auto; }
.features li::after { content: ""; display: block; height: 9px; margin: 4px -15px 0 15px; border: solid #c6c6c6; border-width: 0 0 2px 2px; }
.features li:last-child::after { border-bottom: 0; height: 8px; }
.marker { position: relative; margin: 11px 0 0 -8px; }
.settings { margin: 19px 9px 0 auto; }
```
